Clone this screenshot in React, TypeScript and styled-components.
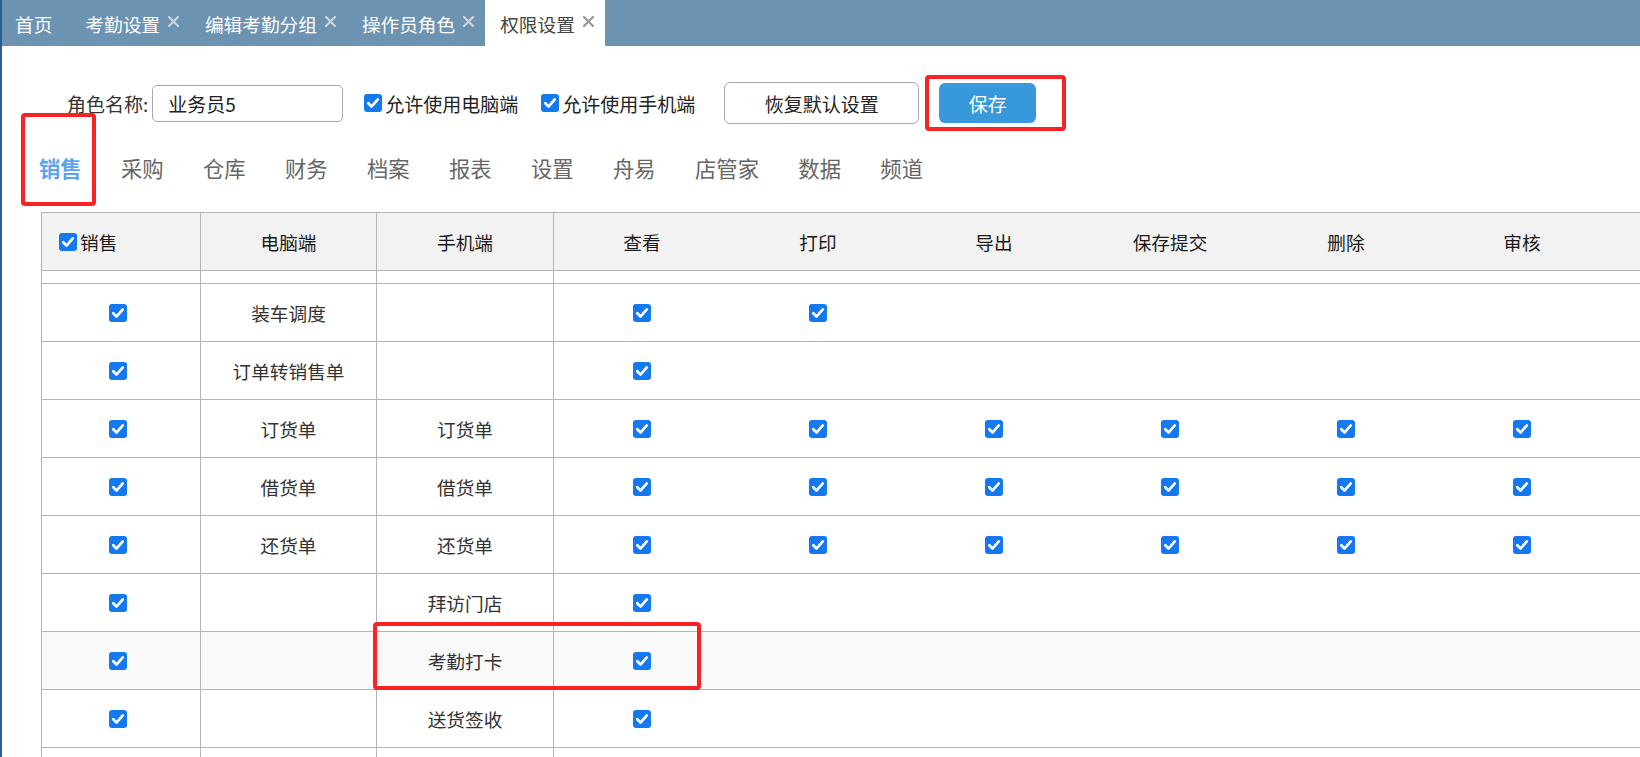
import React from "react";
import styled, { createGlobalStyle } from "styled-components";

const GlobalStyle = createGlobalStyle`
  html, body {
    margin: 0;
    padding: 0;
    background: #fff;
  }
  body {
    font-family: "Noto Sans CJK SC", "Noto Sans", sans-serif;
    overflow: hidden;
  }
  * {
    box-sizing: border-box;
  }
`;

const BLUE = "#1479f0";
const LINE = "#b4b4b4";
const MARK = "#fa2222";

const Page = styled.div`
  width: 1640px;
  height: 757px;
  border-left: 2px solid #2d5f8c;
  overflow: hidden;
  background: #fff;
`;

/* ---------- top tab bar ---------- */

const TabBar = styled.div`
  display: flex;
  height: 46px;
  background: #6d93b2;
`;

const Tab = styled.div<{ active?: boolean; first?: boolean }>`
  display: flex;
  align-items: center;
  padding: ${p => (p.first ? "0 18px 0 13px" : "0 10px 0 15px")};
  background: ${p => (p.active ? "#fff" : "transparent")};
  color: ${p => (p.active ? "#444" : "#fff")};
  font-size: 18.67px;
  white-space: nowrap;
`;

const Close = styled.svg<{ active?: boolean }>`
  width: 13px;
  height: 13px;
  margin-left: 7px;
  margin-bottom: 3px;
  stroke: ${p => (p.active ? "#9a9a9a" : "#c9d4de")};
`;

/* ---------- toolbar ---------- */

const Toolbar = styled.div`
  display: flex;
  align-items: center;
  height: 42px;
  margin-top: 36px;
  padding-left: 65px;
  font-size: 19px;
  color: #333;
`;

const NameInput = styled.input`
  width: 191px;
  height: 37px;
  margin-left: 4px;
  padding: 0 15px;
  border: 1px solid #aaa;
  border-radius: 5px;
  font-family: inherit;
  font-size: 19px;
  color: #222;
  outline: none;
`;

const CheckLabel = styled.label<{ gap: number }>`
  display: flex;
  align-items: center;
  gap: 3px;
  margin-left: ${p => p.gap}px;
  color: #222;
`;

const ResetButton = styled.button`
  width: 195px;
  height: 42px;
  margin-left: 29px;
  border: 1px solid #a9a9a9;
  border-radius: 6px;
  background: #fff;
  font-family: inherit;
  font-size: 19px;
  color: #222;
`;

const SaveWrap = styled.div`
  position: relative;
  margin-left: 20px;
`;

const SaveButton = styled.button`
  display: block;
  width: 97px;
  height: 40px;
  border: none;
  border-radius: 6px;
  background: #3898dc;
  font-family: inherit;
  font-size: 19px;
  color: #fff;
`;

/* red annotation frames drawn over the screenshot */
const Mark = styled.div<{ l: number; t: number; w: number; h: number }>`
  position: absolute;
  left: ${p => p.l}px;
  top: ${p => p.t}px;
  width: ${p => p.w}px;
  height: ${p => p.h}px;
  border: 4px solid ${MARK};
  border-radius: 4px;
  pointer-events: none;
  z-index: 5;
`;

/* ---------- module tabs ---------- */

const ModuleBar = styled.div`
  display: flex;
  gap: 39.33px;
  margin-top: 28.5px;
  padding-left: 37px;
  height: 30px;
`;

const ModuleTab = styled.div<{ active?: boolean }>`
  position: relative;
  font-size: 21.33px;
  line-height: 30px;
  font-weight: ${p => (p.active ? 700 : 400)};
  color: ${p => (p.active ? "#5aa5f0" : "#666")};
`;

/* ---------- table ---------- */

const Table = styled.div`
  width: 1700px;
  margin-top: 29.5px;
  margin-left: 39px;
  border-left: 1px solid ${LINE};
  border-top: 1px solid ${LINE};
`;

const Row = styled.div<{ h: number; head?: boolean; hover?: boolean }>`
  position: relative;
  display: grid;
  grid-template-columns: 159px 176px 177px repeat(6, 176px) 1fr;
  height: ${p => p.h + 1}px;
  border-bottom: 1px solid ${LINE};
  background: ${p => (p.head ? "#f2f2f2" : p.hover ? "#f9f9f9" : "#fff")};
  color: ${p => (p.head ? "#1a1a1a" : "#333")};
  font-size: 18.67px;
`;

const Cell = styled.div<{ divider?: boolean; lead?: boolean; left?: boolean }>`
  display: flex;
  align-items: center;
  justify-content: ${p => (p.left ? "flex-start" : "center")};
  gap: 3px;
  padding-left: ${p => (p.left ? 17 : 0)}px;
  padding-right: ${p => (p.lead ? 7 : 0)}px;
  border-right: ${p => (p.divider ? `1px solid ${LINE}` : "none")};
  overflow: hidden;
  white-space: nowrap;
`;

const Check: React.FC = () => (
  <svg width="18" height="18" viewBox="0 0 18 18">
    <rect x="0" y="0" width="18" height="18" rx="3" fill={BLUE} />
    <path
      d="M4.3 9.3 L7.5 12.6 L13.8 5.4"
      fill="none"
      stroke="#fff"
      strokeWidth="2.7"
      strokeLinecap="round"
      strokeLinejoin="round"
    />
  </svg>
);

const CloseIcon: React.FC<{ active?: boolean }> = ({ active }) => (
  <Close active={active} viewBox="0 0 13 13" strokeWidth="2.3" strokeLinecap="round">
    <line x1="2" y1="2" x2="11" y2="11" />
    <line x1="11" y1="2" x2="2" y2="11" />
  </Close>
);

type PermRow = {
  pc?: string;
  mobile?: string;
  perms: boolean[];
  hover?: boolean;
  marked?: boolean;
};

const ALL = [true, true, true, true, true, true];

const rows: PermRow[] = [
  { pc: "装车调度", perms: [true, true] },
  { pc: "订单转销售单", perms: [true] },
  { pc: "订货单", mobile: "订货单", perms: ALL },
  { pc: "借货单", mobile: "借货单", perms: ALL },
  { pc: "还货单", mobile: "还货单", perms: ALL },
  { mobile: "拜访门店", perms: [true] },
  { mobile: "考勤打卡", perms: [true], hover: true, marked: true },
  { mobile: "送货签收", perms: [true] },
];

const tabs = [
  { title: "首页" },
  { title: "考勤设置", closable: true },
  { title: "编辑考勤分组", closable: true },
  { title: "操作员角色", closable: true },
  { title: "权限设置", closable: true, active: true },
];

const modules = ["销售", "采购", "仓库", "财务", "档案", "报表", "设置", "舟易", "店管家", "数据", "频道"];

const permHeads = ["查看", "打印", "导出", "保存提交", "删除", "审核"];

const PermCells: React.FC<{ perms: boolean[] }> = ({ perms }) => (
  <>
    {permHeads.map((_, i) => (
      <Cell key={i}>{perms[i] ? <Check /> : null}</Cell>
    ))}
    <Cell />
  </>
);

const App: React.FC = () => {
  return (
    <Page>
      <GlobalStyle />
      <TabBar>
        {tabs.map((t, i) => (
          <Tab key={t.title} active={t.active} first={i === 0}>
            {t.title}
            {t.closable && <CloseIcon active={t.active} />}
          </Tab>
        ))}
      </TabBar>

      <Toolbar>
        <span>角色名称:</span>
        <NameInput defaultValue="业务员5" />
        <CheckLabel gap={21}>
          <Check />
          允许使用电脑端
        </CheckLabel>
        <CheckLabel gap={23}>
          <Check />
          允许使用手机端
        </CheckLabel>
        <ResetButton>恢复默认设置</ResetButton>
        <SaveWrap>
          <SaveButton>保存</SaveButton>
          <Mark l={-14} t={-8} w={141} h={56} />
        </SaveWrap>
      </Toolbar>

      <ModuleBar>
        {modules.map((m, i) => (
          <ModuleTab key={m} active={i === 0}>
            {m}
            {i === 0 && <Mark l={-18} t={-39.5} w={75} h={93} />}
          </ModuleTab>
        ))}
      </ModuleBar>

      <Table>
        <Row h={57} head>
          <Cell divider left>
            <Check />
            销售
          </Cell>
          <Cell divider>电脑端</Cell>
          <Cell divider>手机端</Cell>
          {permHeads.map(h => (
            <Cell key={h}>{h}</Cell>
          ))}
          <Cell />
        </Row>

        {/* first row is scrolled under the header */}
        <Row h={12}>
          <Cell divider lead />
          <Cell divider />
          <Cell divider />
          <PermCells perms={[]} />
        </Row>

        {rows.map((r, i) => (
          <Row key={i} h={57} hover={r.hover}>
            <Cell divider lead>
              <Check />
            </Cell>
            <Cell divider>{r.pc}</Cell>
            <Cell divider>{r.mobile}</Cell>
            <PermCells perms={r.perms} />
            {r.marked && <Mark l={331} t={-10} w={328} h={68} />}
          </Row>
        ))}

        <Row h={57}>
          <Cell divider lead>
            <Check />
          </Cell>
          <Cell divider />
          <Cell divider />
          <PermCells perms={[true]} />
        </Row>
      </Table>
    </Page>
  );
};

export default App;
